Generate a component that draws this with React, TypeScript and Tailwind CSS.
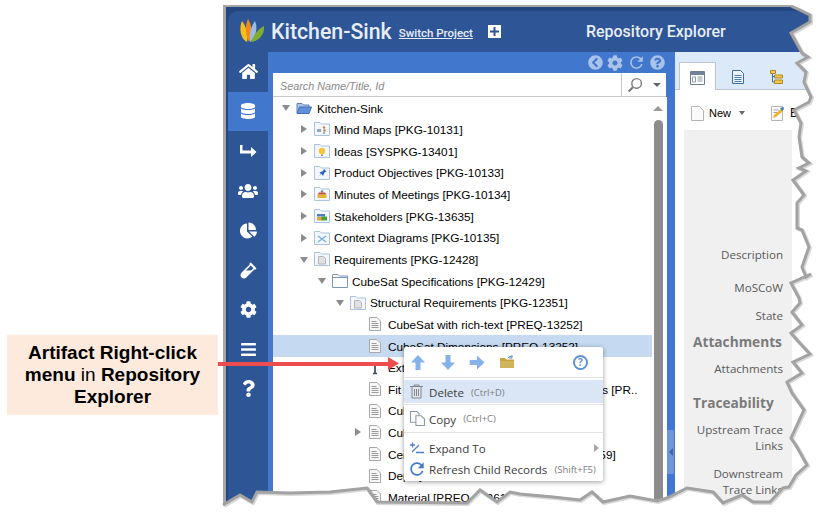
import { FaHome, FaDatabase, FaUsers, FaChartPie, FaVial, FaCog, FaBars, FaQuestion, FaChevronCircleLeft, FaQuestionCircle } from "react-icons/fa";
import { MdRefresh } from "react-icons/md";

type Row = { level: number; arrow?: "open" | "closed"; icon: string; text: string };

const rows: Row[] = [
  { level: 0, arrow: "open", icon: "root", text: "Kitchen-Sink" },
  { level: 1, arrow: "closed", icon: "mind", text: "Mind Maps [PKG-10131]" },
  { level: 1, arrow: "closed", icon: "idea", text: "Ideas [SYSPKG-13401]" },
  { level: 1, arrow: "closed", icon: "pin", text: "Product Objectives [PKG-10133]" },
  { level: 1, arrow: "closed", icon: "meet", text: "Minutes of Meetings [PKG-10134]" },
  { level: 1, arrow: "closed", icon: "stake", text: "Stakeholders [PKG-13635]" },
  { level: 1, arrow: "closed", icon: "ctx", text: "Context Diagrams [PKG-10135]" },
  { level: 1, arrow: "open", icon: "req", text: "Requirements [PKG-12428]" },
  { level: 2, arrow: "open", icon: "plain", text: "CubeSat Specifications [PKG-12429]" },
  { level: 3, arrow: "open", icon: "req", text: "Structural Requirements [PKG-12351]" },
  { level: 4, icon: "doc", text: "CubeSat with rich-text [PREQ-13252]" },
  { level: 4, icon: "doc", text: "CubeSat Dimensions [PREQ-13252]" },
  { level: 4, icon: "text", text: "External Dimensions" },
  { level: 4, icon: "doc", text: "Fit within a CubeSat Deployer Dimensions [PR.." },
  { level: 4, icon: "doc", text: "CubeSat Mass" },
  { level: 4, arrow: "closed", icon: "doc", text: "CubeSat Structure" },
  { level: 4, icon: "doc", text: "Center of Mass Offset Limits [PREQ-13259]" },
  { level: 4, icon: "doc", text: "Deployment" },
  { level: 4, icon: "doc", text: "Material [PREQ-13261]" },
];

function Doc() {
  return (
    <svg width="14" height="16" viewBox="0 0 14 16" className="shrink-0">
      <path d="M1.5 1.5h7.5l3.5 3.5v9.5h-11z" fill="#f7f7f7" stroke="#a8a8a8" />
      <path d="M3.5 5.5h5M3.5 7.5h7M3.5 9.5h7M3.5 11.5h7" stroke="#9a9a9a" />
    </svg>
  );
}

function FolderIcon({ kind }: { kind: string }) {
  if (kind === "doc") return <Doc />;
  if (kind === "text") {
    return (
      <svg width="14" height="16" viewBox="0 0 14 16" className="shrink-0">
        <path d="M2 3.500h10M7 3v10M5 13.500h4" stroke="#3f4a58" strokeWidth="1.700" fill="none" />
      </svg>
    );
  }
  if (kind === "root") {
    return (
      <svg width="16" height="14" viewBox="0 0 16 14" className="shrink-0">
        <path d="M1 12V2.5h5l1.5 1.5H13v2" fill="#a9c4e8" stroke="#5f83b5" />
        <path d="M1 12.5l2.5-6.5H15.5l-2.5 6.5z" fill="#5f90d8" stroke="#456fae" />
      </svg>
    );
  }
  return (
    <svg width="16" height="16" viewBox="0 0 16 16" className="shrink-0">
      <path
        d="M.5 14.5V1.5h5.5l1.5 1.5h8v11.5z"
        fill={kind === "plain" ? "#ffffff" : "#f3f7fc"}
        stroke={kind === "plain" ? "#7a96ba" : "#aac3e2"}
      />
      {kind === "plain" && <path d="M.5 4.5h15" stroke="#7a96ba" />}
      {kind === "mind" && (
        <g>
          <path d="M3 8h4v3H3z" fill="#8ea6c4" />
          <circle cx="10" cy="6.5" r="1.3" fill="#b98a52" />
          <circle cx="10.5" cy="9.5" r="1.3" fill="#b98a52" />
          <circle cx="10" cy="12" r="1.1" fill="#9a9a9a" />
        </g>
      )}
      {kind === "idea" && (
        <g>
          <circle cx="8" cy="8" r="3.2" fill="#f5c63c" />
          <path d="M7 11.5h2v1.5H7z" fill="#a58b4a" />
        </g>
      )}
      {kind === "pin" && <path d="M4 12l3-3-1.5-1.5L9 6l1-2 2.5 2.5-2 1-1.5 3.500L7.500 9z" fill="#2f62c9" />}
      {kind === "meet" && (
        <g>
          <path d="M3.500 8.500h9v3.500h-9z" fill="#e3b72f" />
          <path d="M5 6.500h6l1.500 2h-9z" fill="#c0574a" />
          <circle cx="8" cy="5.500" r="1.200" fill="#7f7f7f" />
        </g>
      )}
      {kind === "stake" && (
        <g>
          <path d="M3 6h8v2.500H3z" fill="#4f7fc0" />
          <path d="M3 9h5v3.500H3z" fill="#e2a92e" />
          <path d="M7.500 8.500h5.500v4H7.500z" fill="#4f9e3d" />
        </g>
      )}
      {kind === "ctx" && <path d="M4 6l8 6M12 6l-8 6" stroke="#7fb0d8" strokeWidth="1.500" />}
      {kind === "req" && (
        <path d="M4.500 5.500h5l2 2v5.500h-7z" fill="#e2e2e2" stroke="#b5b5b5" />
      )}
    </svg>
  );
}

function TreeRow({ row, selected }: { row: Row; selected: boolean }) {
  // level offsets: 18px for each step, first arrow at x=282
  const pads = ["pl-[9px]", "pl-[27px]", "pl-[45px]", "pl-[63px]", "pl-[81px]"];
  return (
    <div className={`flex h-[21.65px] items-center whitespace-nowrap ${pads[row.level]} ${selected ? "bg-[#c5d9f1]" : ""}`}>
      <span className="flex w-[14px] shrink-0 items-center">
        {row.arrow === "open" && <span className="mt-[1px] h-0 w-0 border-x-[4.5px] border-t-[6px] border-x-transparent border-t-[#8c8c8c]" />}
        {row.arrow === "closed" && <span className="ml-[1px] h-0 w-0 border-y-[4.5px] border-l-[6px] border-y-transparent border-l-[#8c8c8c]" />}
      </span>
      <span className={`flex shrink-0 items-center ${row.level === 0 ? "w-[21px]" : "w-[20px]"}`}>
        <FolderIcon kind={row.icon} />
      </span>
      <span className="mt-[1px]">{row.text}</span>
    </div>
  );
}

function Arrow({ dir }: { dir: "up" | "down" | "right" }) {
  const rot = dir === "up" ? "" : dir === "down" ? "rotate-180" : "rotate-90";
  return (
    <svg width="14" height="15" viewBox="0 0 14 15" className={rot}>
      <path d="M7 0l7 7.500H9.500V15h-5V7.500H0z" fill="#86b2ea" />
    </svg>
  );
}

function MenuRow({ icon, label, keys, active, caret }: { icon: React.ReactNode; label: string; keys?: string; active?: boolean; caret?: boolean }) {
  return (
    <div className={`flex items-center pl-[6px] ${active ? "h-[23px] bg-[#dae6f5]" : "h-[21px]"}`}>
      <span className="flex w-[19px] shrink-0 items-center">{icon}</span>
      <span className="mt-[3px] text-[#3c3c3c]">{label}</span>
      {keys && <span className="ml-[7px] mt-[3px] text-[9.5px] text-[#7c7c7c]">{keys}</span>}
      {caret && <span className="ml-auto mr-[4px] h-0 w-0 border-y-[4.5px] border-l-[5px] border-y-transparent border-l-[#a5a5a5]" />}
    </div>
  );
}

const tear =
  "M791 6 L800 10 L810 15 L810 22 L791 33 L796 42 L802 53 L808 57 L797 63 L806 72 L804 82 L811 97 L809 102 L794 110 L801 123 L799 137 L802 157 L809 163 L799 168 L806 171 L793 180 L804 195 L797 203 L797 228 L802 230 L809 247 L802 267 L806 277 L811 274 L791 283 L799 298 L800 303 L792 312 L802 325 L791 333 L797 340 L810 354 L793 362 L802 373 L787 382 L792 393 L804 410 L791 438 L797 447 L807 465 L796 475 L789 487 L783 488 L770 502 L753 502 L742 495 L723 503 L713 492 L687 488 L667 498 L657 501 L630 496 L603 502 L592 492 L580 500 L553 497 L520 494 L510 492 L497 502 L480 490 L467 503 L377 502 L367 488 L330 492 L290 493 L257 492 L252 502 L240 495 L223 505";

export default function App() {
  return (
    <div className="relative h-[513px] w-[819px] overflow-hidden bg-white pl-[223px] pt-[5px] font-['Liberation_Sans',sans-serif]">
      {/* App window */}
      <div className="h-[503px] w-[590px] overflow-hidden border-l-[3px] border-t-2 border-[#a6a6a6] bg-[#24477f] pl-[2px] pt-[4px]">
        <div className="h-full overflow-hidden rounded-tl-[10px] bg-[#2e5596]">
          {/* Header */}
          <div className="flex h-[41px] items-center pl-[12px] font-['Roboto',sans-serif] text-[#e8edf6]">
            <svg width="25" height="24" viewBox="0 0 25 24" className="mb-[2px] shrink-0">
              <path d="M7 23C0 19-1 9 2 2c4 5 7 14 5 21z" fill="#f7bf1e" />
              <path d="M9 23C5 15 5 6 8 0c4 6 5 15 1 23z" fill="#f08a1d" />
              <path d="M10 23c-1-8 1-16 5-21 3 7 1 16-5 21z" fill="#9dbce4" />
              <path d="M11 23c2-6 7-13 13-16 1 8-5 15-13 16z" fill="#80ae2c" />
            </svg>
            <span className="ml-[6px] text-[21.3px] font-medium leading-none">Kitchen-Sink</span>
            <span className="ml-[7px] mt-[5px] text-[11.5px] font-medium underline">Switch Project</span>
            <span className="ml-[15px] flex h-[13px] w-[13px] items-center justify-center bg-white">
              <svg width="9" height="9" viewBox="0 0 9 9"><path d="M3.500 0h2v3.500H9v2H5.500V9h-2V5.500H0v-2h3.500z" fill="#2e5596" /></svg>
            </span>
            <span className="ml-[85px] text-[16px] font-medium">Repository Explorer</span>
          </div>

          <div className="flex h-[460px]">
            {/* Sidebar */}
            <div className="flex w-[40px] shrink-0 flex-col text-white">
              {[<FaHome size={19} />, <FaDatabase size={16} />, null, <FaUsers size={20} />, <FaChartPie size={17} />, <FaVial size={17} />, <FaCog size={17} />, <FaBars size={17} />, <FaQuestion size={17} />].map((icon, i) => (
                <div key={i} className={`flex h-[39.65px] items-center justify-center ${i === 1 ? "bg-[#4178cd]" : ""}`}>
                  {icon ?? (
                    <svg width="18" height="12" viewBox="0 0 18 12">
                      <path d="M1 0h2.500v5.500H12V2l5.500 5-5.500 5V8.500H1z" fill="#ffffff" />
                    </svg>
                  )}
                </div>
              ))}
            </div>

            {/* Tree panel */}
            <div className="flex w-[407px] shrink-0 flex-col bg-[#4178cd] pl-[5px] pr-[8px]">
              <div className="flex h-[21px] shrink-0 items-center justify-end gap-[4px] pr-[2px] text-[#a9c2e8]">
                <FaChevronCircleLeft size={15} />
                <FaCog size={16} />
                <MdRefresh size={19} />
                <FaQuestionCircle size={15} />
              </div>
              <div className="flex h-[24px] w-[393px] shrink-0 items-center border-b border-[#c8c8c8] bg-white text-[10.8px] italic text-[#8a8a8a]">
                <span className="flex-1 pl-[7px] pt-[3px]">Search Name/Title, Id</span>
                <span className="flex h-full w-[45px] items-center gap-[10px] border-l border-[#c8c8c8] pl-[5px]">
                  <svg width="16" height="16" viewBox="0 0 15 15" fill="none" stroke="#7a7a7a">
                    <circle cx="9" cy="6" r="4.500" strokeWidth="1.300" />
                    <path d="M5.500 9.500L1.500 13.500" strokeWidth="2" />
                  </svg>
                  <span className="h-0 w-0 border-x-[4px] border-t-[4px] border-x-transparent border-t-[#666666]" />
                </span>
              </div>
              <div className="flex min-h-0 flex-1 overflow-hidden bg-white text-[11.75px] text-black">
                <div className="w-[379px] shrink-0">
                  {rows.map((r, i) => (
                    <TreeRow key={i} row={r} selected={i === 11} />
                  ))}
                </div>
                <div className="flex flex-1 flex-col items-center pr-[3px] pt-[9px]">
                  <span className="h-0 w-0 border-x-[5px] border-b-[5px] border-x-transparent border-b-[#9a9a9a]" />
                  <span className="mt-[9px] w-[9px] flex-1 rounded-t-[5px] bg-[#8c8c8c]" />
                </div>
              </div>
            </div>

            {/* Details panel */}
            <div className="relative flex min-w-0 flex-1 flex-col bg-white">
              <div className="flex h-[38px] shrink-0 items-end border-b border-[#bcc6d2] bg-[#dce9f8] pl-[4px]">
                <div className="-mb-[1px] flex h-[28px] w-[37px] items-center justify-center border border-b-0 border-[#bcc6d2] bg-white pt-[3px]">
                  <svg width="15" height="14" viewBox="0 0 15 14">
                    <path d="M.5.500h14v13H.500z" fill="#ffffff" stroke="#6f7f92" />
                    <path d="M1 1h13v3H1z" fill="#6f8299" />
                    <path d="M7.500 6h5M7.500 8h5M7.500 10h5M2.500 6h3v5h-3z" stroke="#8a98a8" fill="none" />
                  </svg>
                </div>
                <div className="mb-[2px] ml-[16px] flex h-[20px] items-center">
                  <svg width="12" height="14" viewBox="0 0 12 14">
                    <path d="M.500.500h8l3 3v10h-11z" fill="#eaf2fb" stroke="#3f6f9f" />
                    <path d="M2.500 5.500h7M2.500 7.500h7M2.500 9.500h7M2.500 11.500h7" stroke="#4f7fae" />
                  </svg>
                </div>
                <div className="mb-[2px] ml-[26px] flex h-[20px] items-center">
                  <svg width="13" height="14" viewBox="0 0 13 14">
                    <path d="M.500.500h5v3h-5zM4.500 5h8v3h-8zM4.500 10h8v3.500h-8z" fill="#f2c94c" stroke="#b08a1e" />
                    <path d="M2.500 4v8h2M2.500 6.500h2" stroke="#3f6fb5" fill="none" />
                  </svg>
                </div>
              </div>

              <div className="flex h-[40px] shrink-0 items-center pl-[16px] pt-[6px] text-[11px] text-black">
                <svg width="13" height="15" viewBox="0 0 13 15">
                  <path d="M.500.500h8l4 4v10h-12z" fill="#fbfbfb" stroke="#b5b5b5" />
                </svg>
                <span className="ml-[5px]">New</span>
                <span className="ml-[8px] h-0 w-0 border-x-[3.500px] border-t-[4px] border-x-transparent border-t-[#666666]" />
                <svg width="13" height="15" viewBox="0 0 13 15" className="ml-[26px]">
                  <path d="M.500.500h11v14H.500z" fill="#fbfbfb" stroke="#b5b5b5" />
                  <path d="M2.500 4h5M2.500 6.500h4" stroke="#a0a0a0" />
                  <path d="M2 12l1-3 7-6 2 2-7 6z" fill="#f0b429" />
                  <path d="M9 2l3.500-1 .5 2-2 2z" fill="#3f78c9" />
                </svg>
                <span className="ml-[6px] text-[12px]">E</span>
              </div>

              <div className="ml-[9px] mr-[21px] flex min-h-0 flex-1 flex-col overflow-hidden bg-[#f0f0f0] pl-[9px] pr-[9px] font-['Open_Sans',sans-serif] text-[11.6px] leading-[16px] text-[#5a5a5a]">
                <div className="mt-[117px] text-right">Description</div>
                <div className="mt-[17px] text-right">MoSCoW</div>
                <div className="mt-[12px] text-right">State</div>
                <div className="mt-[8px] text-[13.7px] font-bold leading-[20px] text-[#7a7a7a]">Attachments</div>
                <div className="mt-[9px] text-right">Attachments</div>
                <div className="mt-[16px] text-[13.7px] font-bold leading-[20px] text-[#7a7a7a]">Traceability</div>
                <div className="ml-auto mt-[9px] w-[90px] text-right">Upstream Trace Links</div>
                <div className="ml-auto mt-[12px] w-[90px] text-right">Downstream Trace Links</div>
              </div>

              {/* splitter handle */}
              <div className="absolute -left-[8px] top-[378px] flex h-[44px] w-[7px] items-center justify-center bg-[#6f96d8]">
                <span className="h-0 w-0 border-y-[4px] border-r-[4px] border-y-transparent border-r-[#3c66a8]" />
              </div>
            </div>
          </div>
        </div>
      </div>

      {/* Torn edge of the screenshot */}
      <svg width="819" height="513" viewBox="0 0 819 513" className="pointer-events-none absolute left-0 top-0">
        <path d={`${tear} L223 513 L819 513 L819 0 L791 0 Z`} fill="#ffffff" />
        <path d={tear} fill="none" stroke="#666666" strokeOpacity="0.25" strokeWidth="4" transform="translate(1 1)" />
        <path d={tear} fill="none" stroke="#a2a2a2" strokeWidth="3" />
      </svg>

      {/* Callout */}
      <div className="absolute left-[7px] top-[335px] flex h-[80px] w-[211px] items-center justify-center bg-[#fdeadd] text-center text-[19px] font-bold leading-[22px] text-black">
        <p>
          Artifact Right-click
          <br />
          menu <span className="font-normal">in</span> Repository
          <br />
          Explorer
        </p>
      </div>

      {/* Red arrow */}
      <svg width="181" height="13" viewBox="0 0 181 13" className="pointer-events-none absolute left-[218px] top-[357px]">
        <path d="M0 5h170V0l11 6.500-11 6.500V9H0z" fill="#ee4d4d" />
      </svg>

      {/* Context menu */}
      <div className="absolute left-[404px] top-[347px] h-[134px] w-[199px] rounded-[2px] bg-white text-[11.6px] shadow-[0_1px_5px_rgba(0,0,0,0.4)] font-['Open_Sans',sans-serif]">
        <div className="flex h-[31px] items-center border-b border-[#e2e2e2] pl-[7px]">
          <Arrow dir="up" />
          <span className="ml-[16px]"><Arrow dir="down" /></span>
          <span className="ml-[15px]"><Arrow dir="right" /></span>
          <svg width="14" height="14" viewBox="0 0 14 14" className="ml-[16px]">
            <path d="M0 3h5l1 1.500h8V13H0z" fill="#c9a43a" />
            <path d="M0 6h14v7H0z" fill="#d0b45c" />
            <path d="M8 3c1-2 3-2 4-1M12 0v3H9" stroke="#5a8fd6" fill="none" />
          </svg>
          <span className="ml-[59px] flex h-[15px] w-[15px] items-center justify-center rounded-full border-2 border-[#5f90d8] text-[10px] font-bold text-[#5f90d8]">?</span>
        </div>
        <div className="mt-[2px] border-b border-[#e2e2e2] pb-[1px]">
          <MenuRow
            active
            label="Delete"
            keys="(Ctrl+D)"
            icon={
              <svg width="13" height="15" viewBox="0 0 13 15" fill="#e4e8ee" stroke="#7f858d">
                <path d="M0 2.500h13M4 2.500V1h5v1.500M2 3v11h9V3M4.500 5v7M6.500 5v7M8.500 5v7" />
              </svg>
            }
          />
        </div>
        <div className="flex h-[28px] items-center border-b border-[#e2e2e2] pl-[6px]">
          <span className="flex w-[19px] shrink-0 items-center">
            <svg width="15" height="15" viewBox="0 0 14 14" fill="#ffffff" stroke="#8f99a6">
              <path d="M.500.500h6l2 2v8h-8z" />
              <path d="M5.500 4.500h5l3 3v6h-8z" />
            </svg>
          </span>
          <span className="mt-[2px] text-[#3c3c3c]">Copy</span>
          <span className="ml-[7px] mt-[2px] text-[9.5px] text-[#7c7c7c]">(Ctrl+C)</span>
        </div>
        <div className="mt-[4px]">
          <MenuRow
            label="Expand To"
            caret
            icon={
              <svg width="14" height="12" viewBox="0 0 14 12" fill="none" stroke="#4f7fc4" strokeWidth="1.300">
                <path d="M0 3h5M2.500.500v5M2 10l7-7M6 10.500h8" />
              </svg>
            }
          />
          <MenuRow
            label="Refresh Child Records"
            keys="(Shift+F5)"
            icon={<MdRefresh size={20} className="-ml-[3px] text-[#3f78c9]" />}
          />
        </div>
      </div>
    </div>
  );
}
